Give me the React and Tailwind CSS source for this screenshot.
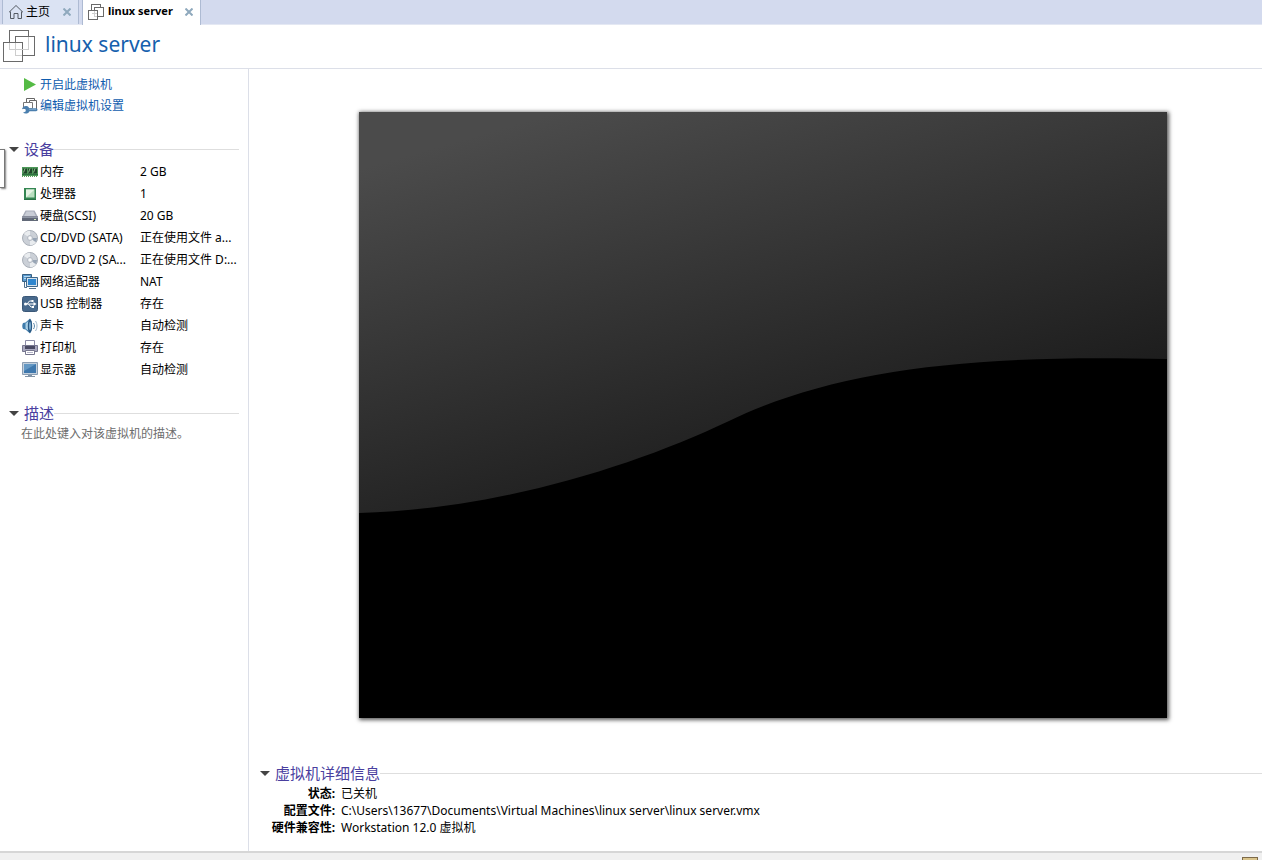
const FONT = "font-['Noto_Sans','Noto_Sans_CJK_SC',sans-serif]";

function HomeIcon() {
    return (
        <svg className="h-4 w-4 shrink-0" viewBox="0 0 16 16" fill="none" stroke="#555b63">
            <path d="M1 8.3 8 1.5l7 6.8M2.5 7.5v7h3.5v-5h4v5h3.5v-7" />
        </svg>
    );
}

function MachineIcon({ className }) {
    return (
        <svg className={className} viewBox="0 0 32 32" fill="none" shapeRendering="crispEdges">
            <path d="M6.5 0.5h19v19h-19z" fill="#fff" stroke="#6a6a6a" />
            <path d="M12.5 6.5h19v19h-19z" fill="#fff" stroke="#6a6a6a" />
            <path d="M0.5 12.5h19v19h-19z" fill="#fff" stroke="#6a6a6a" />
            <path d="M12.5 13v12.5H19M6.5 13v6.500H19M13 19.500h12.500V7" stroke="#cdcdcd" />
        </svg>
    );
}

function SmallMachineIcon() {
    return (
        <svg className="h-4 w-4 shrink-0" viewBox="0 0 16 16" fill="#fff" stroke="#6a6a6a" shapeRendering="crispEdges">
            <path d="M3.5 0.5h9v9h-9z" />
            <path d="M6.5 3.5h9v9h-9z" />
            <path d="M0.5 6.5h9v9h-9z" />
            <path d="M6.5 7v5.5H9M4 9.5h5" fill="none" stroke="#cfcfcf" />
        </svg>
    );
}

function PlayIcon() {
    return (
        <svg className="h-4 w-4 shrink-0" viewBox="0 0 16 16">
            <path d="M2 1 14 7.500 2 14z" fill="#55bb45" />
        </svg>
    );
}

function SettingsIcon() {
    return (
        <svg className="h-4 w-4 shrink-0" viewBox="0 0 16 16" fill="none">
            <path d="M4.5 0.5h8v7h-8z" fill="#fff" stroke="#666" />
            <path d="M7.5 2.5h7v9h-7z" fill="#fff" stroke="#666" />
            <path d="M1.5 4.5h9v6h-9z" fill="#fff" stroke="#777" />
            <path
                d="M4.500 8c1.500.3 2.300 1 2.700 2.200H14c2 0 2 3 0 3H7.500C6.800 15.300 3.500 16.300 1 14.800l2.600-1.300.2-1.800L2.300 10.500 0 11.300C.3 9 2.300 7.600 4.500 8z"
                fill="#4b7fae"
            />
            <path d="M7 11.200h7" stroke="#86b0d3" />
        </svg>
    );
}

function DeviceIcon({ name }) {
    return (
        <svg className="h-4 w-4 shrink-0" viewBox="0 0 16 16" fill="none">
            {name === 'memory' && (
                <>
                    <path d="M0 3h16v9H0z" fill="#4c9858" />
                    <path d="M1 4.500h4v5H1zM6 4.500h4v5H6zM11 4.500h4v5h-4z" fill="#1f4529" />
                    <path d="m1.500 8.500 1.500-4M6.500 8.500 8 4.500M11.500 8.500l1.500-4" stroke="#8dbb8c" />
                    <path d="M0 10.500h16" stroke="#2d7040" />
                    <path d="M0 12.500h16" stroke="#5f9f5a" strokeDasharray="1 1" />
                </>
            )}
            {name === 'cpu' && (
                <>
                    <path d="M2 2h12v12H2z" fill="#348652" />
                    <path d="M4 3.500h8.500v8H4z" fill="#b9dfc0" />
                    <path d="M4 3.500h8.500L4 11.500z" fill="#e5f4e4" />
                    <path d="M2.500 13.500h11" stroke="#1f5d38" strokeDasharray="1 1" />
                </>
            )}
            {name === 'disk' && (
                <>
                    <path d="M3.500 2.500h9L16 9H0z" fill="#a9aebb" />
                    <path d="M4.500 3.500h7l2.300 4.500H2.200z" fill="#c9cdd6" />
                    <path d="M0 8.500h16V13H0z" fill="#626978" />
                    <path d="M0 9.500h16" stroke="#8f96a4" />
                    <path d="M12 11h2v1h-2z" fill="#d5f0c0" />
                </>
            )}
            {name === 'disc' && (
                <>
                    <circle cx="8" cy="8" r="7.500" fill="#cbd0d7" stroke="#a9afb8" />
                    <path d="M8 8 2 4A7.200 7.200 0 0 1 8 .8zM8 8l6 4A7.200 7.200 0 0 1 8 15.200z" fill="#e9ecef" />
                    <path d="m8 8 7 0a7 7 0 0 1-1.500 4z" fill="#98a5b5" />
                    <circle cx="8" cy="8" r="2.500" fill="#eceef1" stroke="#b3b9c2" />
                    <circle cx="8" cy="8" r="1" fill="#fff" />
                </>
            )}
            {name === 'network' && (
                <>
                    <path d="M0.500 0.500h9v7h-9z" fill="#5b9bd0" stroke="#376083" />
                    <path d="M2 2.500h6M2 4.500h3" stroke="#b9dcf3" />
                    <path d="M4.500 3.500h11v9h-11z" fill="#d5e2ec" stroke="#3f678a" />
                    <path d="M6 5h8v6H6z" fill="#2f86cf" />
                    <path d="M7 14.500h7M2.500 8v5.500H5" stroke="#50718e" />
                </>
            )}
            {name === 'usb' && (
                <>
                    <rect x="0.500" y="0.500" width="15" height="15" rx="2" fill="#48698c" stroke="#3b5878" />
                    <path d="M3 8h9M5 8l2.500-3H10M6.500 8 9 11h2" stroke="#fff" />
                    <path d="m11.500 6 3 2-3 2z" fill="#fff" />
                    <circle cx="3.500" cy="8" r="1.500" fill="#fff" />
                    <path d="M9.500 4h2v2h-2zM10 10h2v2h-2z" fill="#fff" />
                </>
            )}
            {name === 'sound' && (
                <>
                    <path d="M1 5 3.500 4.500 8 .5c2.500 3 2.500 11 0 15L3.500 11.500 1 11c-1-1.800-1-4.200 0-6z" fill="#3f7cac" />
                    <path d="M3.500 5.500 7 2.500c-1.300 4-1.300 7-.3 10.500L3.500 10.500z" fill="#a9cfe6" />
                    <ellipse cx="8" cy="8" rx="2.200" ry="6.800" fill="#2a5a85" />
                    <ellipse cx="8" cy="8" rx="1" ry="4" fill="#78abd0" />
                    <path d="M11.500 5c1.300 2 1.300 4 0 6" stroke="#5885a8" />
                    <path d="M13.500 3c2 3 2 7 0 10" stroke="#9bb5ca" />
                </>
            )}
            {name === 'printer' && (
                <>
                    <path d="M3.500 0.500h9v6h-9z" fill="#fff" stroke="#8c8ca6" />
                    <path d="M0.500 5.500h15v6h-15z" fill="#a9a9bf" stroke="#77778f" />
                    <path d="M3 6h10v3H3z" fill="#4a4a63" />
                    <path d="M3.500 10.500h9v4h-9z" fill="#fff" stroke="#77778f" />
                    <path d="M5 12.500h6" stroke="#b4b4c8" />
                </>
            )}
            {name === 'display' && (
                <>
                    <path d="M0.500 0.500h15v12h-15z" fill="#c3d0dd" stroke="#8a9db2" />
                    <path d="M2 2h12v9H2z" fill="#3f78ad" />
                    <path d="M2 2h12L2 9z" fill="#6498c4" />
                    <path d="M6 13h4v1.500H6z" fill="#8193a6" />
                    <path d="M3 14.500h10" stroke="#8193a6" />
                </>
            )}
        </svg>
    );
}

const devices = [
    { icon: 'memory', name: '内存', value: '2 GB' },
    { icon: 'cpu', name: '处理器', value: '1' },
    { icon: 'disk', name: '硬盘(SCSI)', value: '20 GB' },
    { icon: 'disc', name: 'CD/DVD (SATA)', value: '正在使用文件 a...' },
    { icon: 'disc', name: 'CD/DVD 2 (SA...', value: '正在使用文件 D:...' },
    { icon: 'network', name: '网络适配器', value: 'NAT' },
    { icon: 'usb', name: 'USB 控制器', value: '存在' },
    { icon: 'sound', name: '声卡', value: '自动检测' },
    { icon: 'printer', name: '打印机', value: '存在' },
    { icon: 'display', name: '显示器', value: '自动检测' },
];

const details = [
    { label: '状态:', value: '已关机' },
    { label: '配置文件:', value: 'C:\\Users\\13677\\Documents\\Virtual Machines\\linux server\\linux server.vmx' },
    { label: '硬件兼容性:', value: 'Workstation 12.0 虚拟机' },
];

function CloseButton({ label }) {
    return (
        <button type="button" aria-label={label} className="flex h-4 w-4 items-center justify-center">
            <svg className="h-2 w-2" viewBox="0 0 8 8" stroke="#8fa9bd" strokeWidth="2">
                <path d="m0.500 0.500 7 7m0-7-7 7" />
            </svg>
        </button>
    );
}

function SectionHeading({ children }) {
    return (
        <h2 className="flex h-[21px] items-center text-[15px] leading-5 text-[#4a3f9f]">
            <button type="button" className="flex items-center gap-[5px] whitespace-nowrap">
                <svg className="h-[5px] w-[10px]" viewBox="0 0 10 5">
                    <path d="M0 0h10L5 5z" fill="#444" />
                </svg>
                <span className="pb-0.5">{children}</span>
            </button>
            <span className="h-px flex-1 bg-[#dedede]" />
        </h2>
    );
}

function Sidebar() {
    return (
        <aside className="w-[249px] shrink-0 border-r border-[#dcdfe8] pt-[5px] pr-[9px] pl-[9px]">
            <nav className="pl-[13px] text-[#0f5cae]">
                <a href="#start" className="flex h-[21px] items-center gap-0.5">
                    <PlayIcon />
                    开启此虚拟机
                </a>
                <a href="#settings" className="flex h-[21px] items-center gap-0.5">
                    <SettingsIcon />
                    编辑虚拟机设置
                </a>
            </nav>

            <section className="mt-[23px]">
                <SectionHeading>设备</SectionHeading>
                <table className="mt-px w-full table-fixed">
                    <tbody>
                        {devices.map((device) => (
                            <tr key={device.name} className="h-[22px]">
                                <th scope="row" className="w-[131px] p-0 pl-[13px] text-left font-normal">
                                    <span className="flex items-center gap-0.5 whitespace-nowrap">
                                        <DeviceIcon name={device.icon} />
                                        {device.name}
                                    </span>
                                </th>
                                <td className="p-0 whitespace-nowrap">{device.value}</td>
                            </tr>
                        ))}
                    </tbody>
                </table>
            </section>

            <section className="mt-[22px]">
                <SectionHeading>描述</SectionHeading>
                <textarea
                    aria-label="描述"
                    rows={2}
                    placeholder="在此处键入对该虚拟机的描述。"
                    className="block w-full resize-none pl-3 leading-5 outline-none placeholder:text-[#6d6d6d]"
                />
            </section>
        </aside>
    );
}

function Screen() {
    return (
        <svg
            className="block aspect-4/3 w-full max-w-[808px] bg-black shadow-[1px_1px_4px_1px_rgba(0,0,0,0.65)]"
            viewBox="0 0 808 606"
            preserveAspectRatio="none"
        >
            <defs>
                <linearGradient id="glare" gradientUnits="userSpaceOnUse" x1="130" y1="20" x2="245" y2="420">
                    <stop offset="0" stopColor="#4b4b4b" />
                    <stop offset="1" stopColor="#1c1c1c" />
                </linearGradient>
            </defs>
            <path d="M0 0H808V247C610 242 475 258 370 309C275 354 140 397 0 401Z" fill="url(#glare)" />
        </svg>
    );
}

export default function App() {
    return (
        <div className={`relative flex min-h-screen flex-col bg-white text-xs text-black ${FONT}`}>
            <div className="flex h-[25px] items-stretch gap-[3px] border-b border-[#e4e8f3] bg-[#d3daee] pl-0.5">
                <div className="flex w-[77px] items-center border-x border-[#aebbd3] bg-[#dbe3f3] pb-px pl-[5px]">
                    <button type="button" className="flex flex-1 items-center gap-0.5 whitespace-nowrap">
                        <HomeIcon />
                        主页
                    </button>
                    <CloseButton label="关闭主页" />
                    <span className="w-[3px]" />
                </div>
                <div className="-mb-px flex w-[119px] items-center border-x border-[#aebbd3] bg-white pb-0.5 pl-[5px]">
                    <button type="button" className="flex flex-1 items-center gap-1 text-[11px] font-bold whitespace-nowrap">
                        <SmallMachineIcon />
                        linux server
                    </button>
                    <CloseButton label="关闭 linux server" />
                    <span className="w-[3px]" />
                </div>
            </div>

            <header className="flex h-11 items-center gap-2.5 border-b border-[#dcdfe8] pb-0.5 pl-[3px]">
                <MachineIcon className="h-8 w-8" />
                <h1 className="pb-1 text-[21px] leading-8 text-[#1560ad]">linux server</h1>
            </header>

            <div className="flex flex-1">
                <Sidebar />
                <main className="flex min-w-0 flex-1 flex-col">
                    <div className="flex flex-1 items-center justify-center pr-2 pl-[23px]">
                        <Screen />
                    </div>
                    <section className="pt-0.5 pb-[15px] pl-[11px]">
                        <SectionHeading>虚拟机详细信息</SectionHeading>
                        <dl className="mt-px grid grid-cols-[75px_1fr] gap-x-1.5 leading-[17px]">
                            {details.map((item) => (
                                <div key={item.label} className="contents">
                                    <dt className="text-right font-bold whitespace-nowrap">{item.label}</dt>
                                    <dd>{item.value}</dd>
                                </div>
                            ))}
                        </dl>
                    </section>
                </main>
            </div>

            <footer className="flex h-[9px] justify-end overflow-hidden border-t-2 border-[#d6d6d6] bg-[#f0f0f0] pt-1 pr-1">
                <span className="h-4 w-4 border border-[#7d6a48] bg-[#d9c48c]" />
            </footer>

            {/* edge of the collapsed library panel */}
            <div className="absolute top-[149px] left-0 h-[39px] w-[5px] border-y border-r border-[#777] bg-white shadow-[1px_1px_2px_rgba(0,0,0,0.5)]" />
        </div>
    );
}
